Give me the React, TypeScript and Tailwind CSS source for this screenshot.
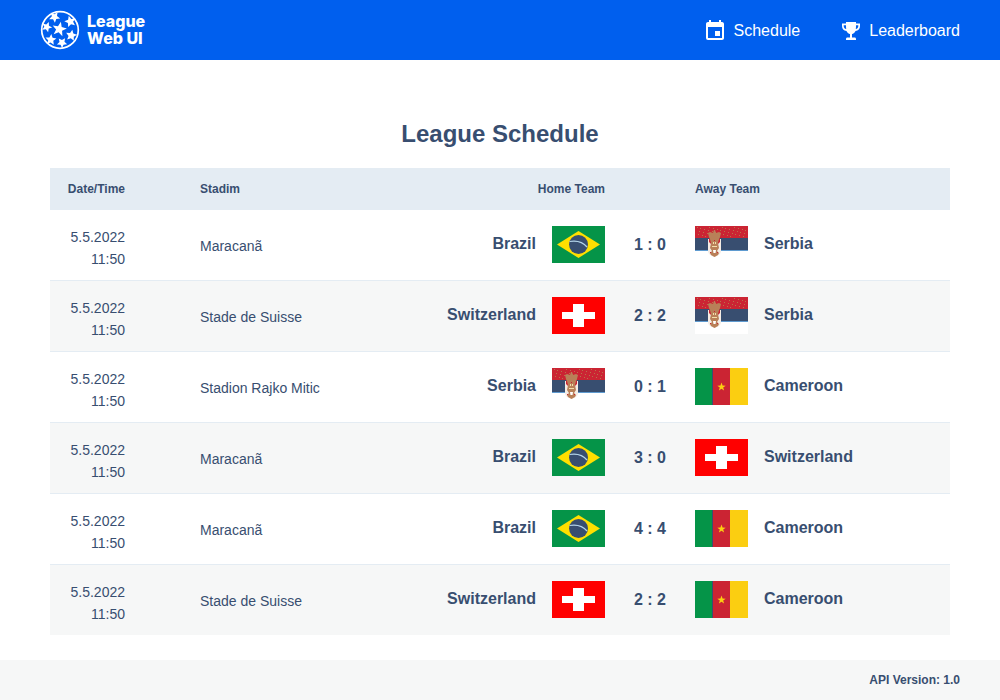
import { MdEvent } from "react-icons/md";

type Team = "Brazil" | "Serbia" | "Switzerland" | "Cameroon";

interface Match {
  stadium: string;
  home: Team;
  away: Team;
  score: string;
}

const matches: Match[] = [
  { stadium: "Maracanã", home: "Brazil", away: "Serbia", score: "1 : 0" },
  { stadium: "Stade de Suisse", home: "Switzerland", away: "Serbia", score: "2 : 2" },
  { stadium: "Stadion Rajko Mitic", home: "Serbia", away: "Cameroon", score: "0 : 1" },
  { stadium: "Maracanã", home: "Brazil", away: "Switzerland", score: "3 : 0" },
  { stadium: "Maracanã", home: "Brazil", away: "Cameroon", score: "4 : 4" },
  { stadium: "Stade de Suisse", home: "Switzerland", away: "Cameroon", score: "2 : 2" },
];

function starPoints(cx: number, cy: number, outer: number, inner: number, turn: number) {
  return Array.from({ length: 10 }, (_, i) => {
    const radius = i % 2 ? inner : outer;
    const angle = ((turn - 90 + i * 36) * Math.PI) / 180;
    return `${(cx + radius * Math.cos(angle)).toFixed(2)},${(cy + radius * Math.sin(angle)).toFixed(2)}`;
  }).join(" ");
}

function Ball() {
  return (
    <svg viewBox="0 0 40 40" className="size-10 shrink-0" aria-hidden="true">
      <circle cx="20" cy="20" r="18.3" fill="none" stroke="white" strokeWidth="1.7" />
      <g fill="white">
        <polygon points={starPoints(19.3, 19.2, 7.6, 3.2, 12)} />
        <polygon points={starPoints(14.5, 7, 5.8, 2.7, 32)} />
        <polygon points={starPoints(30.3, 11.5, 6, 2.8, -15)} />
        <polygon points={starPoints(31.3, 25.5, 5.8, 2.8, 10)} />
        <polygon points={starPoints(22, 32.7, 5.4, 2.6, 35)} />
        <polygon points={starPoints(10.8, 29.7, 5.8, 2.7, 5)} />
        <polygon points={starPoints(6.8, 17, 5.4, 2.5, 22)} />
      </g>
    </svg>
  );
}

function Trophy() {
  return (
    <svg viewBox="0 0 18 18" className="size-[18px]" fill="white" aria-hidden="true">
      <path
        fillRule="evenodd"
        d="M4 0h10v1.500h4V4c0 2.800-1.800 4.700-4.500 5-.8 1.700-2 2.700-3.500 3.100V15.500h2.500c1 0 1.500.7 1.500 1.500v1H4v-1c0-.8.5-1.500 1.500-1.500H8v-3.400C6.500 11.700 5.300 10.700 4.500 9 1.800 8.700 0 6.800 0 4V1.500h4zM1.700 3.200V4c0 1.500.9 2.700 2.500 3.100C4 6 4 4.600 4 3.200zm12.300 0c0 1.400 0 2.800-.2 3.900 1.600-.4 2.500-1.600 2.500-3.100v-.8z"
      />
    </svg>
  );
}

const speckles = Array.from({ length: 40 }, (_, i) => ({
  x: 2 + Math.floor(i * 1.25),
  y: 1 + ((i * 7) % 10),
}));

function Flag({ team }: { team: Team }) {
  return (
    <svg
      viewBox="0 0 53 37"
      className="h-[37px] w-[53px] shrink-0"
      role="img"
      aria-label={team}
    >
      {team === "Brazil" && (
        <>
          <path fill="#059448" d="M0 0h53v37H0z" />
          <path fill="#ffdf00" d="M5 18.500 26.500 5 48 18.500 26.500 32z" />
          <circle cx="26.500" cy="18.500" r="9.500" fill="#384e70" />
          <path d="M17.500 15.500c6-1 13 0 17.500 5.500" fill="none" stroke="#b5d5ea" strokeWidth="1.200" />
        </>
      )}
      {team === "Switzerland" && (
        <>
          <path fill="#ff0000" d="M0 0h53v37H0z" />
          <path fill="#ffffff" d="M21 7h11v8h11v7H32v8H21v-8H10v-7h11z" />
        </>
      )}
      {team === "Cameroon" && (
        <>
          <path fill="#059448" d="M0 0h18v37H0z" />
          <path fill="#cb2433" d="M18 0h17v37H18z" />
          <path fill="#384e70" d="M17 0h1v37h-1z" />
          <path fill="#fbce11" d="M35 0h18v37H35z" />
          <polygon fill="#fbce11" points={starPoints(26.5, 19, 4.4, 1.8, 0)} />
        </>
      )}
      {team === "Serbia" && (
        <>
          <path fill="#ffffff" d="M0 24h53v13H0z" />
          <path fill="#cb2433" d="M0 0h53v12H0z" />
          <path fill="#384e70" d="M0 12h53v12H0z" />
          <path fill="#5f9bd0" d="M0 24h53v1H0z" />
          {speckles.map((dot, i) => (
            <path key={i} fill="#b9734a" d={`M${dot.x} ${dot.y}h1v1h-1z`} />
          ))}
          <path fill="#f4ece4" d="M13 13h13v12c0 3-3 5-6.500 6C16 30 13 28 13 25z" />
          <path fill="#b98058" d="M13 7l2-1 3 1 1-3h1l1 3 3-1 2 1-1 4-1 3h-9l-1-3z" />
          <path fill="#cb2433" d="M14 12l2 2v4l-2-2zm11 0-2 2v4l2-2z" />
          <path fill="#b98058" d="M15 13h9l-1 4 1 5-2 3 2 2-1 2-3.500 2-3.500-2-1-2 2-2-2-3 1-5z" />
          <path fill="#f3dfac" d="M17 20h5v1h-5zm1-4h1v2h-1zm2 0h1v2h-1z" />
          <path fill="#ffffff" d="M18 24h3l-.5 3h-2z" />
          <path fill="#cb2433" d="M15 26h1v1h-1zm7 0h1v1h-1zm-3-12h1v1h-1z" />
        </>
      )}
    </svg>
  );
}

export default function App() {
  return (
    <div className="flex min-h-screen flex-col bg-white font-['Liberation_Sans',Arial,sans-serif] text-[#384e70]">
      <header className="flex h-[60px] items-center justify-between bg-[#005fee] px-10 text-white">
        <a href="#schedule" className="flex items-center gap-[7px]">
          <Ball />
          <span className="flex flex-col pb-px font-['Inter',sans-serif] text-base leading-[17px] font-extrabold">
            <span>League</span>
            <span>Web UI</span>
          </span>
        </a>
        <nav className="flex gap-[42px] pt-[2px] text-base">
          <a href="#schedule" className="flex items-center gap-[7px]">
            <MdEvent className="size-6" aria-hidden="true" />
            Schedule
          </a>
          <a href="#leaderboard" className="flex items-center gap-[9px]">
            <Trophy />
            Leaderboard
          </a>
        </nav>
      </header>

      <main className="flex-1 px-[50px] pt-[58px] pb-[25px]">
        <h1 className="mb-[18px] text-center text-2xl leading-8 font-bold">League Schedule</h1>
        <table className="w-full table-fixed border-separate border-spacing-0">
          <colgroup>
            <col className="w-[75px]" />
            <col className="w-[24%]" />
            <col />
            <col className="w-[90px]" />
            <col className="w-[255px]" />
          </colgroup>
          <thead>
            <tr className="h-[42px] bg-[#e4ecf3] text-xs">
              <th className="text-right">Date/Time</th>
              <th className="pl-[75px] text-left">Stadim</th>
              <th className="text-right">Home Team</th>
              <td />
              <th className="text-left">Away Team</th>
            </tr>
          </thead>
          <tbody>
            {matches.map((match, i) => (
              <tr
                key={i}
                className="h-[71px] *:border-b *:border-[#e4ecf3] last:h-[70px] last:*:border-b-0 even:bg-[#f6f7f7]"
              >
                <td className="pt-[6px] text-right text-sm leading-[22px]">
                  5.5.2022
                  <br />
                  11:50
                </td>
                <td className="pt-[2px] pl-[75px] text-sm">{match.stadium}</td>
                <td className="pb-px">
                  <div className="flex items-center justify-end gap-4 font-bold">
                    <span className="pb-[2px]">{match.home}</span>
                    <Flag team={match.home} />
                  </div>
                </td>
                <td className="text-center font-bold">{match.score}</td>
                <td className="pb-px">
                  <div className="flex items-center gap-4 font-bold">
                    <Flag team={match.away} />
                    <span className="pb-[2px]">{match.away}</span>
                  </div>
                </td>
              </tr>
            ))}
          </tbody>
        </table>
      </main>

      <footer className="flex h-10 items-center justify-end bg-[#f6f7f7] px-10 text-xs font-bold">
        API Version: 1.0
      </footer>
    </div>
  );
}
